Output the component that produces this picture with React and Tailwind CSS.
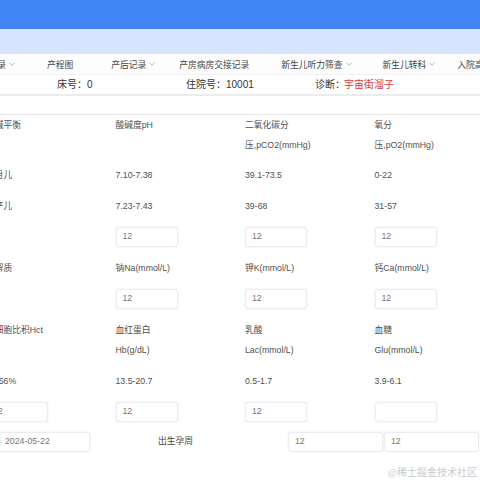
import React from 'react';
import { ChevronDown, Clock } from 'lucide-react';

const navItems = [
  { label: '分娩记录', chevron: true, className: 'w-[17px] shrink-0 justify-end' },
  { label: '产程图', className: 'ml-[30px] shrink-0' },
  { label: '产后记录', chevron: true, className: 'ml-[38px] shrink-0' },
  { label: '产房病房交接记录', className: 'ml-[22px] shrink-0' },
  { label: '新生儿听力筛查', chevron: true, className: 'ml-[32px] shrink-0' },
  { label: '新生儿转科', chevron: true, className: 'ml-[29px] shrink-0' },
  { label: '入院高危评估', className: 'ml-[20px] shrink-0' },
];

const rows = [
  [['酸碱平衡'], ['酸碱度pH'], ['二氧化碳分', '压,pCO2(mmHg)'], ['氧分', '压,pO2(mmHg)']],
  [['足月儿'], ['7.10-7.38'], ['39.1-73.5'], ['0-22']],
  [['早产儿'], ['7.23-7.43'], ['39-68'], ['31-57']],
  [null, { input: '12' }, { input: '12' }, { input: '12' }],
  [['电解质'], ['钠Na(mmol/L)'], ['钾K(mmol/L)'], ['钙Ca(mmol/L)']],
  [null, { input: '12' }, { input: '12' }, { input: '12' }],
  [['红细胞比积Hct'], ['血红蛋白', 'Hb(g/dL)'], ['乳酸', 'Lac(mmol/L)'], ['血糖', 'Glu(mmol/L)']],
  [['43-56%'], ['13.5-20.7'], ['0.5-1.7'], ['3.9-6.1']],
  [{ input: '12' }, { input: '12' }, { input: '12' }, { input: '' }],
];

function Field({ value, icon, className = 'w-[62px]' }) {
  return (
    <div className={`h-5 flex items-center rounded-[3px] border border-[#ececf0] bg-white pl-[6px] text-[8.75px] text-[#777] shadow-[0_0_2px_rgba(0,0,0,0.1)] ${className}`}>
      {icon}
      {value}
    </div>
  );
}

function Cell({ cell }) {
  if (!cell) return <div />;
  if (cell.input !== undefined) return <Field value={cell.input} />;
  return (
    <div>
      {cell.map((line) => (
        <div key={line} className="h-5 leading-5 whitespace-nowrap">{line}</div>
      ))}
    </div>
  );
}

export default function App() {
  return (
    <div className="w-[480px] h-[480px] overflow-hidden bg-white relative font-['Liberation_Sans','Noto_Sans_CJK_SC',sans-serif] text-[#606266]">
      <div className="h-[29px] bg-[#4285f4]" />
      <div className="h-[25px] bg-[#d6e4fd]" />

      {/* nav tabs */}
      <div className="h-5 pt-[3px] flex items-center whitespace-nowrap text-[8.75px] text-[#444] bg-[#fdfdfd]">
        {navItems.map((item) => (
          <div key={item.label} className={`flex items-center ${item.className}`}>
            <span>{item.label}</span>
            {item.chevron && <ChevronDown size={10} strokeWidth={1} className="ml-[1px] -mt-[3px] shrink-0 text-[#555]" />}
          </div>
        ))}
      </div>

      {/* patient info */}
      <div className="h-[20px] flex items-center whitespace-nowrap text-[10px] text-[#333] border-t border-[#f2f2f2] pl-[57px]">
        <span className="w-[129px]">床号：0</span>
        <span className="w-[130px]">住院号：10001</span>
        <span className="-ml-[1px]">诊断：<span className="-ml-[1px] text-[#d9363e]">宇宙街溜子</span></span>
      </div>
      <div className="h-[2px] bg-[#ececec]" />

      <div className="mt-[18px] border-t border-[#e8e8e8] text-[8.75px] text-[#505050]">
        <div className="-ml-[14px] w-[518px]">
          {rows.map((row, i) => (
            <div key={i} className={`grid grid-cols-[129.5px_129.5px_129.5px_129.5px] ${i === 0 ? 'pb-[10px]' : 'pb-[11px]'}`}>
              {row.map((cell, j) => (
                <Cell key={j} cell={cell} />
              ))}
            </div>
          ))}

          {/* date and gestational age */}
          <div className="flex items-center -mt-[1px]">
            <Field
              value="2024-05-22"
              icon={<Clock size={9} strokeWidth={1} className="mr-[3px] shrink-0 text-[#aaa]" />}
              className="w-[104px]"
            />
            <span className="ml-[68px] w-[130px] text-[#444]">出生孕周</span>
            <Field value="12" className="w-[95px]" />
            <Field value="12" className="w-[95px] ml-[1px]" />
          </div>
        </div>
      </div>

      <span className="absolute right-[3px] top-[465px] text-[10px] text-[#cbcbcb] font-['Liberation_Serif','Noto_Sans_CJK_SC',serif]">@稀土掘金技术社区</span>
    </div>
  );
}
